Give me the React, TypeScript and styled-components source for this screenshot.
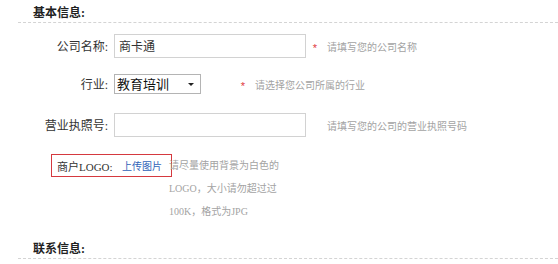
import styled, { createGlobalStyle } from "styled-components";

const GlobalStyle = createGlobalStyle`
  body {
    margin: 0;
    background: #fff;
    font-family: "Liberation Serif", "Noto Sans CJK SC", serif;
  }
`;

const Page = styled.div`
  width: 558px;
  height: 264px;
  overflow: hidden;
  padding-left: 18px;
  box-sizing: border-box;
`;

const SectionTitle = styled.h3<{ $mt?: number }>`
  margin: ${(p) => p.$mt ?? 0}px 0 0;
  padding: 4px 0 0 15px;
  height: 18px;
  line-height: 18px;
  font-size: 12px;
  font-weight: bold;
  color: #222;
  border-bottom: 1px dashed #d4d4d4;
`;

const Row = styled.div<{ $mt: number }>`
  display: flex;
  align-items: center;
  margin-top: ${(p) => p.$mt}px;
`;

const Label = styled.label`
  flex-shrink: 0;
  width: 96px;
  padding-right: 6px;
  box-sizing: border-box;
  text-align: right;
  font-size: 12px;
  color: #333;
`;

const TextInput = styled.input`
  width: 192px;
  height: 24px;
  box-sizing: border-box;
  border: 1px solid #d2d2d2;
  padding: 0 4px;
  font-family: inherit;
  font-size: 12px;
  color: #333;
  outline: none;
`;

const SelectBox = styled.div`
  display: flex;
  align-items: center;
  width: 87px;
  height: 20px;
  box-sizing: border-box;
  border: 1px solid #b4b4b4;
  background: #fff;
`;

const Select = styled.select`
  appearance: none;
  flex: 1;
  min-width: 0;
  height: 18px;
  border: 0;
  padding: 0 0 0 2px;
  background: transparent;
  font-family: inherit;
  font-size: 13px;
  color: #111;
  outline: none;
`;

const Arrow = styled.span`
  width: 0;
  height: 0;
  margin-right: 6px;
  border-left: 3px solid transparent;
  border-right: 3px solid transparent;
  border-top: 3px solid #222;
`;

const Required = styled.span<{ $ml: number }>`
  display: inline-block;
  width: 6px;
  margin-left: ${(p) => p.$ml}px;
  padding-top: 5px;
  text-align: center;
  font-family: "Liberation Sans", sans-serif;
  font-size: 11px;
  line-height: 11px;
  color: #e0393e;
`;

const Hint = styled.span<{ $ml: number }>`
  margin-left: ${(p) => p.$ml}px;
  font-size: 10px;
  color: #a3a3a3;
`;

const LogoRow = styled.div`
  display: flex;
  align-items: flex-start;
  margin-top: 17px;
`;

const LogoBox = styled.div`
  display: flex;
  align-items: center;
  margin-left: 33px;
  width: 121px;
  height: 23px;
  box-sizing: border-box;
  border: 1px solid #d5393f;
  padding-left: 5px;
  font-size: 11px;
`;

const LogoLabel = styled.span`
  width: 60px;
  color: #333;
`;

const UploadLink = styled.a`
  margin-left: 5px;
  font-size: 10px;
  color: #2f63b8;
  text-decoration: none;
  cursor: pointer;
`;

const HintBlock = styled.div`
  margin-left: -3px;
  font-size: 10px;
  line-height: 23px;
  color: #a3a3a3;
`;

const HintLine = styled.span`
  display: block;
`;

export default function App() {
  return (
    <Page>
      <GlobalStyle />
      <SectionTitle>基本信息:</SectionTitle>

      <Row $mt={11}>
        <Label>公司名称:</Label>
        <TextInput defaultValue="商卡通" />
        <Required $ml={6}>*</Required>
        <Hint $ml={9}>请填写您的公司名称</Hint>
      </Row>

      <Row $mt={16}>
        <Label>行业:</Label>
        <SelectBox>
          <Select defaultValue="edu">
            <option value="edu">教育培训</option>
          </Select>
          <Arrow />
        </SelectBox>
        <Required $ml={39}>*</Required>
        <Hint $ml={9}>请选择您公司所属的行业</Hint>
      </Row>

      <Row $mt={19}>
        <Label>营业执照号:</Label>
        <TextInput />
        <Hint $ml={21}>请填写您的公司的营业执照号码</Hint>
      </Row>

      <LogoRow>
        <LogoBox>
          <LogoLabel>商户LOGO:</LogoLabel>
          <UploadLink>上传图片</UploadLink>
        </LogoBox>
        <HintBlock>
          <HintLine>请尽量使用背景为白色的</HintLine>
          <HintLine>LOGO，大小请勿超过过</HintLine>
          <HintLine>100K，格式为JPG</HintLine>
        </HintBlock>
      </LogoRow>

      <SectionTitle $mt={13}>联系信息:</SectionTitle>
    </Page>
  );
}
